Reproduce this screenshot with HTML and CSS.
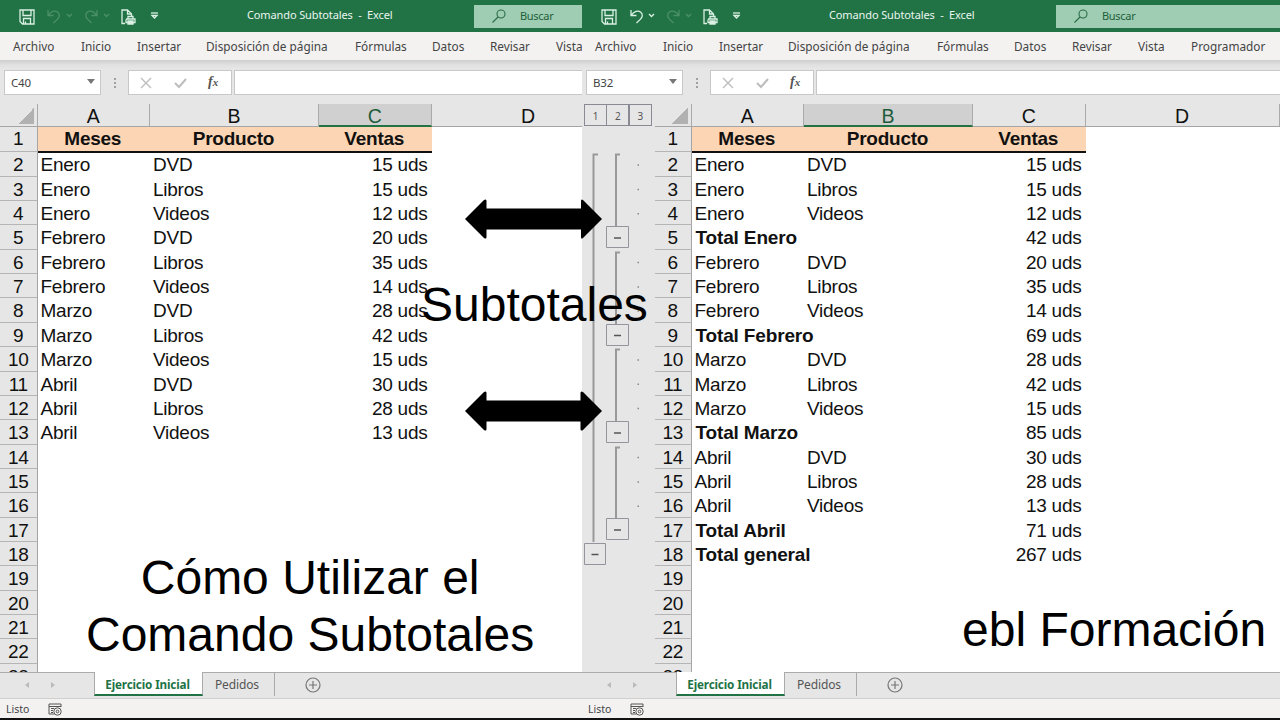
FILE: index.html
```html
<!DOCTYPE html>
<html lang="es">
<head>
<meta charset="utf-8">
<title>Comando Subtotales - Excel</title>
<link rel="stylesheet" href="styles.css">
</head>
<body>
<svg width="0" height="0" class="defs">
  <defs>
    <g id="save"><path d="M1 1h14v14H3.500L1 12.500zM4 1v5.500h8V1M4.500 15v-5.500h7V15M6.500 12.500v2.500"/></g>
    <g id="undo"><path d="M1 1v5.500h5.500M1.300 6.200C4 2.500 8 0.800 10.800 3.200c2.500 2.300 1.600 5.200-.5 7.200L6.500 14"/></g>
    <g id="redo"><path d="M13 1v5.500H7.500M12.700 6.200C10 2.500 6 0.800 3.200 3.200c-2.500 2.300-1.600 5.200.5 7.200L7.500 14"/></g>
    <g id="chev"><path d="M1 1l2.500 2.500L6 1"/></g>
    <g id="print"><path d="M4 14.500H1V1h5.500l4 4v2M6.500 1v4h4M5 10.500V13.500h9v-3.500H5M7 10V7.500h5V10M7 12h5V15H7z"/></g>
    <g id="more"><path d="M0 1h7"/><path d="M1 3.500h5L3.500 6z"/></g>
    <g id="lens"><circle cx="9" cy="5" r="4"/><path d="M6 8l-5.500 5.500"/></g>
    <g id="macro"><path d="M6 11H1V1h12v3M1 3.500h12M3 5.500h3M3 7.500h2M3 9.500h2"/><circle cx="9.500" cy="8.500" r="3.700"/><circle class="dot" cx="9.500" cy="8.500" r="1.300"/></g>
  </defs>
</svg>
<main class="screen">
  <section class="pane left">
    <header class="title">
      <svg class="ic" width="160" height="32">
        <use href="#save" x="19" y="9"/><g class="off"><use href="#undo" x="47" y="9"/><use href="#chev" x="66" y="13"/><use href="#redo" x="84" y="9"/><use href="#chev" x="103" y="13"/></g><use href="#print" x="121" y="9"/><use href="#more" x="151" y="12"/>
      </svg>
      <span class="doc">Comando Subtotales&nbsp; -&nbsp; Excel</span>
      <div class="search"><svg width="14" height="14"><use href="#lens"/></svg><span>Buscar</span></div>
    </header>
    <nav class="ribbon"><span>Archivo</span><span>Inicio</span><span>Insertar</span><span>Disposición de página</span><span>Fórmulas</span><span>Datos</span><span>Revisar</span><span>Vista</span></nav>
    <div class="formula">
      <div class="name"><span>C40</span><i></i></div><div class="grip"><b></b><b></b><b></b></div>
      <div class="fx"><svg width="60" height="24"><path d="M12 7l10 10M22 7l-10 10"/><path class="ok" d="M46 12l4 4 7-8"/></svg><em>f<small>x</small></em></div><div class="input"></div>
    </div>
    <div class="sheet">
      <div class="grid">
        <div class="cols"><span class="corner"></span><span class="a">A</span><span class="b">B</span><span class="c sel">C</span><span class="d">D</span></div>
        <div class="row head"><span class="n">1</span><span class="a">Meses</span><span class="b">Producto</span><span class="c">Ventas</span></div>
        <div class="row"><span class="n">2</span><span class="a">Enero</span><span class="b">DVD</span><span class="c">15 uds</span></div>
        <div class="row"><span class="n">3</span><span class="a">Enero</span><span class="b">Libros</span><span class="c">15 uds</span></div>
        <div class="row"><span class="n">4</span><span class="a">Enero</span><span class="b">Videos</span><span class="c">12 uds</span></div>
        <div class="row"><span class="n">5</span><span class="a">Febrero</span><span class="b">DVD</span><span class="c">20 uds</span></div>
        <div class="row"><span class="n">6</span><span class="a">Febrero</span><span class="b">Libros</span><span class="c">35 uds</span></div>
        <div class="row"><span class="n">7</span><span class="a">Febrero</span><span class="b">Videos</span><span class="c">14 uds</span></div>
        <div class="row"><span class="n">8</span><span class="a">Marzo</span><span class="b">DVD</span><span class="c">28 uds</span></div>
        <div class="row"><span class="n">9</span><span class="a">Marzo</span><span class="b">Libros</span><span class="c">42 uds</span></div>
        <div class="row"><span class="n">10</span><span class="a">Marzo</span><span class="b">Videos</span><span class="c">15 uds</span></div>
        <div class="row"><span class="n">11</span><span class="a">Abril</span><span class="b">DVD</span><span class="c">30 uds</span></div>
        <div class="row"><span class="n">12</span><span class="a">Abril</span><span class="b">Libros</span><span class="c">28 uds</span></div>
        <div class="row"><span class="n">13</span><span class="a">Abril</span><span class="b">Videos</span><span class="c">13 uds</span></div>
        <div class="row"><span class="n">14</span></div>
        <div class="row"><span class="n">15</span></div>
        <div class="row"><span class="n">16</span></div>
        <div class="row"><span class="n">17</span></div>
        <div class="row"><span class="n">18</span></div>
        <div class="row"><span class="n">19</span></div>
        <div class="row"><span class="n">20</span></div>
        <div class="row"><span class="n">21</span></div>
        <div class="row"><span class="n">22</span></div>
        <div class="row last"><span class="n">23</span></div>
      </div>
    </div>
    <div class="tabs"><span class="arrows"><i></i><i class="r"></i></span><span class="tab on">Ejercicio Inicial</span><span class="tab">Pedidos</span><svg width="16" height="16"><circle cx="8" cy="8" r="7"/><path d="M4 8h8M8 4v8"/></svg></div>
    <footer class="status"><span>Listo</span><svg width="15" height="14"><use href="#macro"/></svg></footer>
  </section>

  <section class="pane right">
    <header class="title">
      <svg class="ic" width="160" height="32">
        <use href="#save" x="19" y="9"/><use href="#undo" x="48" y="9"/><use href="#chev" x="66" y="13"/><g class="off"><use href="#redo" x="84" y="9"/><use href="#chev" x="103" y="13"/></g><use href="#print" x="121" y="9"/><use href="#more" x="151" y="12"/>
      </svg>
      <span class="doc">Comando Subtotales&nbsp; -&nbsp; Excel</span>
      <div class="search"><svg width="14" height="14"><use href="#lens"/></svg><span>Buscar</span></div>
    </header>
    <nav class="ribbon"><span>Archivo</span><span>Inicio</span><span>Insertar</span><span>Disposición de página</span><span>Fórmulas</span><span>Datos</span><span>Revisar</span><span>Vista</span><span>Programador</span></nav>
    <div class="formula">
      <div class="name"><span>B32</span><i></i></div><div class="grip"><b></b><b></b><b></b></div>
      <div class="fx"><svg width="60" height="24"><path d="M12 7l10 10M22 7l-10 10"/><path class="ok" d="M46 12l4 4 7-8"/></svg><em>f<small>x</small></em></div><div class="input"></div>
    </div>
    <div class="sheet">
      <div class="outline">
        <div class="levels"><span>1</span><span>2</span><span>3</span></div>
        <svg width="73" height="545">
          <g class="bar"><path d="M16 28.500h-4.500V416"/><path d="M38 28.500h-4V100"/><path d="M38 126.500h-4V198"/><path d="M38 223.500h-4V295"/><path d="M38 321.500h-4V393"/></g>
          <g class="btn"><path d="M24.500 100.500h22v21h-22zM24.500 198.500h22v21h-22zM24.500 295.500h22v21h-22zM24.500 392.500h22v21h-22zM2.500 417.500h21v21h-21z"/></g>
          <g class="minus"><path d="M32 112h7M32 209.500h7M32 307h7M32 404h7M9.500 428.500h7"/></g>
          <g class="pts"><path d="M55.500 39h1.500M55.500 63.400h1.500M55.500 87.700h1.500M55.500 136.500h1.500M55.500 161h1.500M55.500 185h1.500M55.500 234h1.500M55.500 258.300h1.500M55.500 282.600h1.500M55.500 331.500h1.500M55.500 356h1.500M55.500 380.300h1.500"/></g>
        </svg>
      </div>
      <div class="grid">
        <div class="cols"><span class="corner"></span><span class="a">A</span><span class="b sel">B</span><span class="c">C</span><span class="d">D</span></div>
        <div class="row head"><span class="n">1</span><span class="a">Meses</span><span class="b">Producto</span><span class="c">Ventas</span></div>
        <div class="row"><span class="n">2</span><span class="a">Enero</span><span class="b">DVD</span><span class="c">15 uds</span></div>
        <div class="row"><span class="n">3</span><span class="a">Enero</span><span class="b">Libros</span><span class="c">15 uds</span></div>
        <div class="row"><span class="n">4</span><span class="a">Enero</span><span class="b">Videos</span><span class="c">12 uds</span></div>
        <div class="row"><span class="n">5</span><span class="a total">Total Enero</span><span class="b"></span><span class="c">42 uds</span></div>
        <div class="row"><span class="n">6</span><span class="a">Febrero</span><span class="b">DVD</span><span class="c">20 uds</span></div>
        <div class="row"><span class="n">7</span><span class="a">Febrero</span><span class="b">Libros</span><span class="c">35 uds</span></div>
        <div class="row"><span class="n">8</span><span class="a">Febrero</span><span class="b">Videos</span><span class="c">14 uds</span></div>
        <div class="row"><span class="n">9</span><span class="a total">Total Febrero</span><span class="b"></span><span class="c">69 uds</span></div>
        <div class="row"><span class="n">10</span><span class="a">Marzo</span><span class="b">DVD</span><span class="c">28 uds</span></div>
        <div class="row"><span class="n">11</span><span class="a">Marzo</span><span class="b">Libros</span><span class="c">42 uds</span></div>
        <div class="row"><span class="n">12</span><span class="a">Marzo</span><span class="b">Videos</span><span class="c">15 uds</span></div>
        <div class="row"><span class="n">13</span><span class="a total">Total Marzo</span><span class="b"></span><span class="c">85 uds</span></div>
        <div class="row"><span class="n">14</span><span class="a">Abril</span><span class="b">DVD</span><span class="c">30 uds</span></div>
        <div class="row"><span class="n">15</span><span class="a">Abril</span><span class="b">Libros</span><span class="c">28 uds</span></div>
        <div class="row"><span class="n">16</span><span class="a">Abril</span><span class="b">Videos</span><span class="c">13 uds</span></div>
        <div class="row"><span class="n">17</span><span class="a total">Total Abril</span><span class="b"></span><span class="c">71 uds</span></div>
        <div class="row"><span class="n">18</span><span class="a total">Total general</span><span class="b"></span><span class="c">267 uds</span></div>
        <div class="row"><span class="n">19</span></div>
        <div class="row"><span class="n">20</span></div>
        <div class="row"><span class="n">21</span></div>
        <div class="row"><span class="n">22</span></div>
        <div class="row last"><span class="n">23</span></div>
      </div>
    </div>
    <div class="tabs"><span class="arrows"><i></i><i class="r"></i></span><span class="tab on">Ejercicio Inicial</span><span class="tab">Pedidos</span><svg width="16" height="16"><circle cx="8" cy="8" r="7"/><path d="M4 8h8M8 4v8"/></svg></div>
    <footer class="status"><span>Listo</span><svg width="15" height="14"><use href="#macro"/></svg></footer>
  </section>

  <svg class="arrow one" width="138" height="42"><path d="M0 21L19 2Q21.500 .500 21.500 3V10.500H116V3Q116 .500 118 2L137 21L118 40Q116 41.500 116 39V31.500H21.500V39Q21.500 41.500 19 40z"/></svg>
  <svg class="arrow two" width="138" height="42"><path d="M0 21L19 2Q21.500 .500 21.500 3V10.500H115.500V3Q115.500 .500 118 2L137 21L118 40Q115.500 41.500 115.500 39V31.500H21.500V39Q21.500 41.500 19 40z"/></svg>
  <div class="caption mid">Subtotales</div>
  <div class="caption main">Cómo Utilizar el<br>Comando Subtotales</div>
  <div class="caption brand">ebl Formación</div>
</main>
</body>
</html>
```
FILE: styles.css
```css
* { box-sizing: border-box; }
body { margin: 0; background: #fff; font-family: "Noto Sans", "Open Sans", sans-serif; color: #444; }
.defs { position: absolute; }
.screen { position: relative; display: flex; width: 1280px; height: 720px; overflow: hidden; }
.pane { display: flex; flex-direction: column; height: 720px; overflow: hidden; background: #e6e6e6; }
.left { width: 582px; }
.right { width: 698px; }
.pane svg { fill: none; flex: none; }

.title { display: flex; align-items: center; height: 32px; flex: none; background: #217346; color: #e9f5ee; font-size: 11px; white-space: nowrap; }
.ic { stroke: #d9f0e2; stroke-width: 1.3; }
.off { stroke: #4c9069; }
.doc { width: 227px; margin-left: 87px; letter-spacing: -.12px; line-height: 30px; height: 32px; }
.search { display: flex; align-items: center; flex: 1 0 0; height: 23px; padding-left: 18px; background: #9fcdb3; color: #1d5f3a; font-size: 11px; letter-spacing: -.3px; line-height: 21px; }
.search span { height: 23px; }
.search svg { stroke: #2a6b47; stroke-width: 1.1; margin-right: 14px; }

.ribbon { display: grid; grid-template-columns: 68px 56px 69px 149px 77px 58px 66px 53px 80px; height: 28px; flex: none; padding-left: 13px; background: #f3f2f1; font-size: 11.8px; line-height: 28px; white-space: nowrap; }

.formula { display: flex; height: 44px; flex: none; padding: 10px 0 0 4px; background: linear-gradient(#cfcfcf 0, #e1e1e1 5px, #e6e6e6 9px); }
.name, .fx, .input { height: 25px; background: #fff; border: 1px solid #c8c8c8; }
.name { display: flex; align-items: center; justify-content: space-between; width: 97px; padding: 0 5px 0 6px; font-size: 11.5px; letter-spacing: -.2px; }
.name i { border: 4px solid transparent; border-top: 5px solid #777; border-bottom: 0; margin-top: -3px; }
.grip { display: flex; flex-direction: column; align-items: center; justify-content: center; gap: 2px; width: 27px; height: 25px; }
.grip b { width: 2px; height: 2px; background: #a0a0a0; }
.fx { display: flex; width: 104px; }
.fx svg { stroke: #bdbdbd; stroke-width: 1.4; }
.fx .ok { stroke-width: 2; }
.fx em { margin-left: 19px; font: italic bold 14px/22px "Liberation Serif", serif; color: #555; }
.fx small { font-size: 11px; }
.input { flex: 1; margin-left: 2px; border-right: 0; }

.sheet { display: flex; height: 568px; flex: none; overflow: hidden; }
.grid { flex: 1; min-width: 0; background: #fff; overflow: hidden; font: 19px/26px "Liberation Sans", Arial, sans-serif; letter-spacing: -.25px; color: #111; }
.cols { display: flex; width: 800px; height: 23px; background: #e6e6e6; border-bottom: 1px solid #a5a5a5; line-height: 24px; font-size: 19.5px; }
.cols span { height: 22px; text-align: center; border-right: 1px solid #aaa; flex: none; }
.cols .sel { height: 23px; background: #d0d0d0; color: #1f5c3c; border-bottom: 2px solid #217346; }
.cols .corner { border-right: 1px solid #aaa; background: linear-gradient(135deg, transparent 50%, #b1b1b1 50%) 18px 4px / 16px 16px no-repeat; }
.corner, .n { width: 37.500px; flex: none; }
.a { width: 112.500px; }
.b { width: 169px; }
.c { width: 112.500px; }
.d { width: 194px; }
.row { display: flex; height: 24.370px; white-space: nowrap; }
.row .n { height: 100%; text-align: center; background: #e6e6e6; border-right: 1px solid #a5a5a5; border-bottom: 1px solid #b5b5b5; }
.row .a, .row .b { padding-left: 3px; flex: none; }
.row .c { padding-right: 4px; text-align: right; flex: none; }
.row .total { padding-left: 4px; font-weight: bold; letter-spacing: -.15px; }
.head { height: 25.300px; line-height: 24px; }
.head .a, .head .b, .head .c { height: 26px; padding: 0 2px 0 0; background: #fcd5b4; border-bottom: 2px solid #111; text-align: center; font-weight: bold; }
.last .n { border-bottom: 0; }

.right .corner, .right .n { width: 36.500px; }
.right .corner { background-position: 17px 4px; }
.outline { width: 73px; flex: none; }
.levels { display: flex; height: 22px; padding-left: 2px; font-size: 10px; line-height: 23px; color: #555; }
.levels span { width: 23px; margin-right: -.600px; border: 1px solid #8a8a94; text-align: center; }
.outline svg { display: block; }
.bar { stroke: #999; stroke-width: 2; }
.btn { stroke: #94949c; }
.minus { stroke: #555; stroke-width: 1.600; }
.pts { stroke: #888; stroke-width: 1.500; }

.tabs { display: flex; height: 27px; flex: none; border-top: 1px solid #ababab; border-bottom: 1px solid #cfcfcf; font-size: 12px; letter-spacing: -.15px; line-height: 24px; color: #555; }
.arrows { display: flex; gap: 22px; width: 94px; padding: 9px 0 0 25px; }
.arrows i { height: 6px; border: 3.500px solid transparent; border-right: 4px solid #bbb; border-left: 0; }
.arrows .r { border-left: 4px solid #bbb; border-right: 0; }
.tab { height: 23px; width: 72px; padding-left: 12px; border-right: 1px solid #aaa; white-space: nowrap; }
.tab.on { width: 109px; padding: 0 2px 0 0; text-align: center; margin-top: -1px; height: 24px; background: #fff; border-left: 1px solid #aaa; border-bottom: 2px solid #217346; color: #217346; font-weight: bold; font-size: 11.700px; line-height: 25px; }
.tabs svg { margin: 4px 0 0 30px; stroke: #777; stroke-width: 1.200; }
.status { display: flex; height: 21px; flex: none; padding-left: 6px; background: #f3f2f1; border-bottom: 2px solid #111; font-size: 10.500px; line-height: 20px; }
.status span { width: 42px; }
.status svg { margin-top: 4px; stroke: #555; }
.status .dot { fill: #555; }

.arrow { position: absolute; left: 465px; fill: #000; }
.one { top: 198px; }
.two { top: 390px; }
.caption { position: absolute; font: 48px/57px "Liberation Sans", Arial, sans-serif; color: #000; white-space: nowrap; text-align: center; }
.mid { left: 421px; top: 276px; }
.main { left: 86px; top: 549px; }
.brand { left: 962px; top: 601px; }
```
